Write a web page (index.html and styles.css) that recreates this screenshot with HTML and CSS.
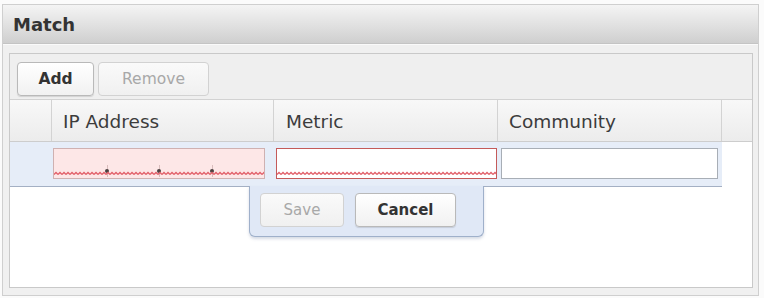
FILE: index.html
```html
<!DOCTYPE html>
<html>
<head>
<meta charset="utf-8">
<link rel="stylesheet" href="styles.css">
</head>
<body>
<div class="panel">
  <div class="panel-head">Match</div>
  <div class="panel-body">
    <div class="grid">
      <div class="toolbar">
        <button class="btn btn-add">Add</button>
        <button class="btn btn-remove" disabled>Remove</button>
      </div>
      <div class="cols">
        <div class="col col-num"></div>
        <div class="col col-ip">IP Address</div>
        <div class="col col-metric">Metric</div>
        <div class="col col-comm">Community</div>
        <div class="col col-fill"></div>
      </div>
      <div class="rows">
        <div class="editor">
          <div class="editor-row">
            <div class="field field-ip invalid">
              <span class="seg"></span><span class="sep"></span>
              <span class="seg"></span><span class="sep"></span>
              <span class="seg"></span><span class="sep"></span>
              <span class="seg"></span>
              <svg class="wave" width="100%" height="5"><defs><pattern id="zz1" width="4" height="5" patternUnits="userSpaceOnUse"><path d="M0 3.5 L2 1.5 L4 3.5" fill="none" stroke="#e2606a" stroke-width="1.4"/></pattern></defs><rect width="100%" height="5" fill="url(#zz1)"/></svg>
            </div>
            <div class="field field-metric invalid">
              <svg class="wave" width="100%" height="5"><defs><pattern id="zz2" width="4" height="5" patternUnits="userSpaceOnUse"><path d="M0 3.5 L2 1.5 L4 3.5" fill="none" stroke="#e2606a" stroke-width="1.4"/></pattern></defs><rect width="100%" height="5" fill="url(#zz2)"/></svg>
            </div>
            <div class="field field-comm"></div>
          </div>
          <div class="editor-btns">
            <button class="btn btn-save" disabled>Save</button>
            <button class="btn btn-cancel">Cancel</button>
          </div>
        </div>
      </div>
    </div>
  </div>
</div>
</body>
</html>
```
FILE: styles.css
```css
* { box-sizing: border-box; }
html, body { margin: 0; padding: 0; background: #fbfbfb; }
body {
  font-family: "DejaVu Sans", "Liberation Sans", sans-serif;
  color: #3a3a3a;
  width: 764px;
  height: 298px;
  overflow: hidden;
}
.panel {
  margin: 4px 6px 0 2px;
  width: 757px;
  height: 292px;
  border: 1px solid #cfcfcf;
  display: flex;
  flex-direction: column;
  background: #f0f0f0;
}
.panel-head {
  height: 39px;
  padding: 0 10px;
  display: flex;
  align-items: center;
  font-weight: bold;
  font-size: 18px;
  color: #333;
  background: linear-gradient(#f4f4f4, #e0e0e0 55%, #cfcfcf);
  border-bottom: 1px solid #c4c4c4;
  box-shadow: 0 1px 0 #fafafa;
}
.panel-body {
  flex: 1;
  padding: 9px 5px 7px 6px;
  display: flex;
}
.grid {
  flex: 1;
  border: 1px solid #c9c9c9;
  background: #fff;
  display: flex;
  flex-direction: column;
}
.toolbar {
  height: 46px;
  background: #efefef;
  border-bottom: 1px solid #d2d2d2;
  display: flex;
  align-items: flex-start;
  padding: 8px 0 0 7px;
  gap: 4px;
}
.btn {
  font-family: "DejaVu Sans", "Liberation Sans", sans-serif;
  height: 34px;
  border: 1px solid #b9b9b9;
  border-radius: 4px;
  background: linear-gradient(#ffffff, #f1f1f1);
  color: #333;
  padding: 0;
  box-shadow: 0 1px 1px rgba(0,0,0,0.12);
}
.btn[disabled] {
  color: #a8a8a8;
  border-color: #d2d2d2;
  box-shadow: none;
  background: linear-gradient(#fafafa, #f0f0f0);
}
.btn-add { width: 77px; font-weight: bold; font-size: 15.5px; }
.btn-remove { width: 111px; font-size: 15.5px; }
.cols {
  height: 42px;
  display: flex;
  border-bottom: 1px solid #cdcdcd;
  background: linear-gradient(#f8f8f8, #ececec);
}
.col {
  border-right: 1px solid #d3d3d3;
  display: flex;
  align-items: center;
  padding-left: 11px;
  padding-top: 2px;
  font-size: 18.5px;
  color: #3c3c3c;
}
.col-num { width: 42px; padding: 0; }
.col-ip { width: 222px; }
.col-metric { width: 224px; padding-left: 12px; }
.col-comm { width: 224px; }
.col-fill { flex: 1; border-right: none; padding: 0; }
.rows {
  flex: 1;
  background: #fff;
}
.editor {
  width: 712px;
  display: flex;
  flex-direction: column;
}
.editor-row {
  height: 45px;
  background: #e6edf8;
  border-bottom: 1px solid #a4b0c4;
  display: flex;
  align-items: flex-start;
  padding-top: 6px;
  padding-left: 43px;
}
.field {
  position: relative;
  height: 31px;
  border: 1px solid #a9a9a9;
  background: #fff;
  display: flex;
}
.field-ip {
  width: 212px;
  background: #fde7e7;
  border-color: #cfb1b1;
}
.field-metric {
  width: 221px;
  margin-left: 11px;
  border-color: #c45a5a;
}
.field-comm {
  width: 217px;
  margin-left: 4px;
  border-color: #a8aeb6;
}
.seg { flex: 1; }
.sep {
  position: relative;
  width: 0;
}
.sep::after {
  content: "";
  position: absolute;
  left: -2px;
  bottom: 5px;
  width: 4px;
  height: 4px;
  border-radius: 50%;
  background: #4a4040;
}
.sep::before {
  content: "";
  position: absolute;
  left: 0;
  bottom: 1px;
  width: 1px;
  height: 12px;
  background: rgba(150,110,110,0.35);
}
.wave {
  position: absolute;
  left: 0;
  bottom: 2px;
  width: 100%;
  height: 5px;
}
.editor-btns {
  align-self: flex-start;
  margin-left: 239px;
  margin-top: -1px;
  width: 235px;
  height: 51px;
  background: #e0e8f6;
  border: 1px solid #9fb0ca;
  border-top: none;
  border-radius: 0 0 6px 6px;
  box-shadow: 0 2px 3px rgba(90,110,150,0.25);
  display: flex;
  align-items: flex-start;
  gap: 11px;
  padding: 7px 0 0 10px;
}
.btn-save { width: 84px; font-size: 15px; }
.btn-cancel { width: 101px; font-size: 15px; font-weight: bold; }
```
